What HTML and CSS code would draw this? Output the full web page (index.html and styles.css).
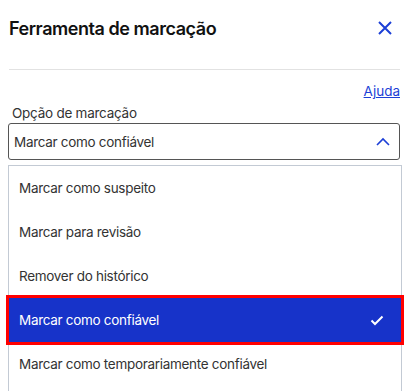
FILE: index.html
```html
<!DOCTYPE html>
<html>
<head>
  <title>Ferramenta de marcação</title>
  <link rel="stylesheet" href="styles.css">
</head>
<body>
  <div class="panel">
    <div class="head">
      <h1>Ferramenta de marcação</h1>
      <button class="close" aria-label="Fechar">
        <svg width="16" height="16" viewBox="0 0 16 16"><path d="M2 2 L14 14 M14 2 L2 14" stroke="#1c3fd6" stroke-width="2" fill="none"/></svg>
      </button>
    </div>
    <div class="divider"></div>

    <div class="help"><a href="#">Ajuda</a></div>

    <label class="field-label">Opção de marcação</label>
    <div class="select">
      <span>Marcar como confiável</span>
      <svg width="14" height="9" viewBox="0 0 14 9"><path d="M1 8 L7 2 L13 8" stroke="#1c3fd6" stroke-width="1.6" fill="none"/></svg>
    </div>

    <ul class="options">
      <li>Marcar como suspeito</li>
      <li>Marcar para revisão</li>
      <li>Remover do histórico</li>
      <li class="selected">
        <span>Marcar como confiável</span>
        <svg width="14" height="11" viewBox="0 0 14 11"><path d="M1.5 5.5 L5 9 L12.5 1.5" stroke="#fff" stroke-width="2" fill="none"/></svg>
      </li>
      <li>Marcar como temporariamente confiável</li>
    </ul>
  </div>
</body>
</html>
```

FILE: styles.css
```css
body {
  margin: 0;
  font-family: Inter, "Noto Sans", sans-serif;
  background-color: #fff;
  color: #333;
}
.panel {
  margin: 0 8px 0 9px;
}
.head {
  height: 56px;
  display: flex;
  align-items: center;
  justify-content: space-between;
}
.head h1 {
  margin: 0;
  font-size: 18px;
  font-weight: 600;
  color: #111;
  letter-spacing: -0.45px;
}
.close {
  border: none;
  background: none;
  padding: 0;
  margin-right: 7px;
  display: flex;
}
.divider {
  margin-top: 13px;
  height: 1px;
  background-color: #e2e2e2;
}
.help {
  margin-top: 11px;
  text-align: right;
  line-height: 20px;
  font-size: 13.5px;
}
.help a {
  color: #1c3fd6;
}
.field-label {
  display: block;
  margin: 2px 0 0 3px;
  line-height: 20px;
  font-size: 13.5px;
  letter-spacing: -0.25px;
  color: #333;
}
.select {
  margin-left: -1px;
  height: 35px;
  border: 1px solid #555;
  border-radius: 3px;
  display: flex;
  align-items: center;
  justify-content: space-between;
  padding: 0 9px 0 5px;
  font-size: 13.5px;
  letter-spacing: -0.3px;
}
.options {
  list-style: none;
  margin: 5px -2px 0 -1px;
  padding: 0;
  border: 1px solid #c3cad4;
  border-bottom: none;
  height: 240px;
}
.options li {
  height: 44px;
  display: flex;
  align-items: center;
  justify-content: space-between;
  padding: 0 17px 0 10px;
  font-size: 13.5px;
  letter-spacing: -0.3px;
}
.options li.selected {
  background-color: #1733c9;
  color: #fff;
  outline: 3px solid #f00;
  position: relative;
}
```
